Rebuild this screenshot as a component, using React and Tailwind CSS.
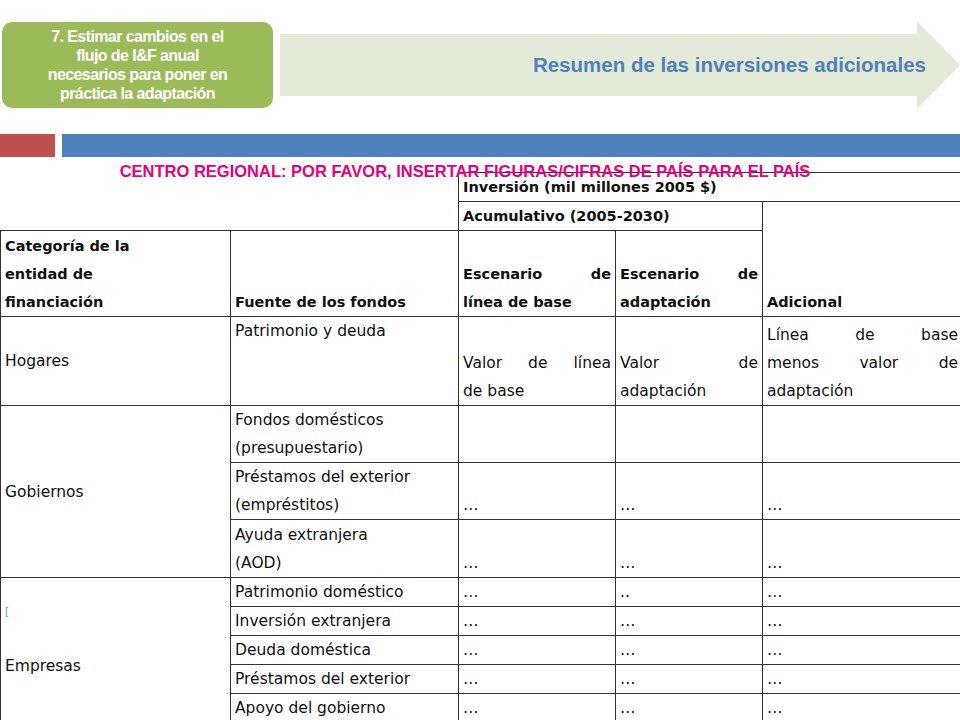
export default function App() {
  const f = { fontFamily: '"Liberation Sans", Arial, sans-serif' };
  const t = { fontFamily: '"DejaVu Sans", Verdana, sans-serif' };
  const c = "border border-[#333] px-[4px] leading-[28px] whitespace-nowrap";
  const j = "block [text-align-last:justify] text-justify";
  const dots = "…";
  return (
    <div className="w-[960px] h-[720px] bg-white relative overflow-hidden" style={f}>
      <div className="flex items-center h-[134px] pt-[22px] pb-[26px]">
        <div className="ml-[2px] w-[271px] h-[86px] rounded-[10px] bg-[#9bbb59] text-white font-bold text-[16px] leading-[19px] text-center flex items-center justify-center px-1 tracking-[-0.6px]">
          7. Estimar cambios en el<br />flujo de I&amp;F anual<br />necesarios para poner en<br />práctica la adaptación
        </div>
        <div className="ml-[7px] flex-1 h-[88px] relative">
          <svg className="absolute inset-0" width="680" height="88" viewBox="0 0 680 88">
            <polygon points="0,13 637,13 637,0 680,44 637,88 637,75 0,75" fill="#e3ead7" />
          </svg>
          <div className="absolute inset-0 flex items-center justify-end pr-[34px] text-[#4f81bd] font-bold text-[20.5px]">Resumen de las inversiones adicionales</div>
        </div>
      </div>
      <div className="flex h-[23px] gap-[7px]">
        <div className="w-[55px] bg-[#c0504d]" />
        <div className="flex-1 bg-[#4f81bd]" />
      </div>
      <div className="relative z-10 text-center text-[#e6007e] font-bold text-[16.5px] leading-[18px] mt-[5px] mr-[32px] pl-[2px]">CENTRO REGIONAL: POR FAVOR, INSERTAR FIGURAS/CIFRAS DE PAÍS PARA EL PAÍS</div>
      <table className="absolute top-[172px] left-0 border-collapse text-[15.5px] text-[#111] table-fixed w-[962px]" style={t}>
        <colgroup>
          <col className="w-[230px]" /><col className="w-[228px]" /><col className="w-[157px]" /><col className="w-[147px]" /><col className="w-[200px]" />
        </colgroup>
        <tbody>
          <tr className="h-[29px]">
            <td colSpan={2}></td>
            <td colSpan={3} className={c + " font-bold text-[14.5px]"}>Inversión (mil millones 2005 $)</td>
          </tr>
          <tr className="h-[29px]">
            <td colSpan={2}></td>
            <td colSpan={2} className={c + " font-bold text-[14.5px]"}>Acumulativo (2005-2030)</td>
            <td rowSpan={2} className={c + " font-bold text-[14.5px] align-bottom"}>Adicional</td>
          </tr>
          <tr className="h-[86px]">
            <td className={c + " font-bold text-[14.5px] align-bottom"}>Categoría de la<br />entidad de<br />financiación</td>
            <td className={c + " font-bold text-[14.5px] align-bottom"}>Fuente de los fondos</td>
            <td className={c + " font-bold text-[14.5px] align-bottom"}><span className={j}>Escenario de</span>línea de base</td>
            <td className={c + " font-bold text-[14.5px] align-bottom"}><span className={j}>Escenario de</span>adaptación</td>
          </tr>
          <tr className="h-[89px]">
            <td className={c}>Hogares</td>
            <td className={c + " align-top"}>Patrimonio y deuda</td>
            <td className={c + " align-bottom"}><span className={j}>Valor de línea</span>de base</td>
            <td className={c + " align-bottom"}><span className={j}>Valor de</span>adaptación</td>
            <td className={c + " align-bottom"}><span className={j}>Línea de base</span><span className={j}>menos valor de</span>adaptación</td>
          </tr>
          <tr className="h-[56px]">
            <td rowSpan={3} className={c}>Gobiernos</td>
            <td className={c}>Fondos domésticos<br />(presupuestario)</td>
            <td className={c}></td><td className={c}></td><td className={c}></td>
          </tr>
          <tr className="h-[56px]">
            <td className={c}>Préstamos del exterior<br />(empréstitos)</td>
            <td className={c + " align-bottom"}>{dots}</td><td className={c + " align-bottom"}>{dots}</td><td className={c + " align-bottom"}>{dots}</td>
          </tr>
          <tr className="h-[58px]">
            <td className={c}>Ayuda extranjera<br />(AOD)</td>
            <td className={c + " align-bottom"}>{dots}</td><td className={c + " align-bottom"}>{dots}</td><td className={c + " align-bottom"}>{dots}</td>
          </tr>
          {[["Patrimonio doméstico", ".."], ["Inversión extranjera", dots], ["Deuda doméstica", dots], ["Préstamos del exterior", dots], ["Apoyo del gobierno", dots]].map(([s, m], i) => (
            <tr key={s} className="h-[29px]">
              {i === 0 && (
                <td rowSpan={5} className={c + " align-top"}>
                  <div className="h-[28px]" />
                  <div className="text-[#8080ff] text-[10px] leading-[12px]">[</div>
                  <div className="h-[34px]" />
                  <div>Empresas</div>
                </td>
              )}
              <td className={c + " leading-[27px]"}>{s}</td>
              <td className={c + " leading-[27px]"}>{dots}</td>
              <td className={c + " leading-[27px]"}>{m}</td>
              <td className={c + " leading-[27px]"}>{dots}</td>
            </tr>
          ))}
        </tbody>
      </table>
    </div>
  );
}
